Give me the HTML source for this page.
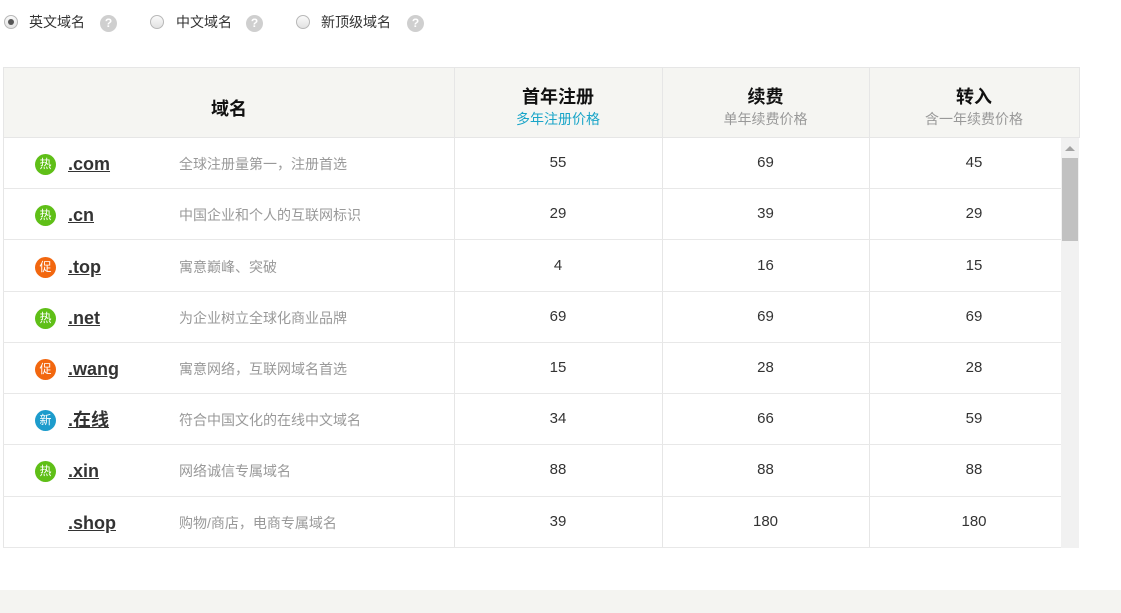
<!DOCTYPE html>
<html><head><meta charset="utf-8">
<style>
*{margin:0;padding:0;box-sizing:border-box}
body{width:1121px;height:613px;background:#fff;position:relative;overflow:hidden;font-family:"Liberation Sans","Noto Sans CJK SC",sans-serif;}
.a{position:absolute}
.radio{width:14px;height:14px;border-radius:50%;border:1px solid #b8b8b8;background:linear-gradient(#fafafa,#e2e2e2);top:15px}
.radio.on::after{content:"";position:absolute;left:3px;top:3px;width:6px;height:6px;border-radius:50%;background:#555}
.rl{top:12px;font-size:14px;color:#333;line-height:20px}
.q{width:17px;height:17px;border-radius:50%;background:#cfcfcf;color:#fff;font-size:12px;font-weight:bold;text-align:center;line-height:17px;top:15px}
.hd{background:#f5f5f2;border:1px solid #e6e6e6;}
.vl{width:1px;background:#e6e6e6}
.hl{height:1px;background:#e8e8e8}
.ic{width:21px;height:21px;border-radius:50%;color:#fff;font-size:12px;text-align:center;line-height:21px;left:35px}
.dm{left:68px;font-size:18px;font-weight:bold;color:#333;text-decoration:underline;line-height:22px}
.ds{left:179px;font-size:14px;color:#999;line-height:22px}
.n{font-size:15px;color:#333;text-align:center;line-height:22px}
.th{font-size:18px;font-weight:bold;color:#111;text-align:center}
.ts{font-size:14px;text-align:center;color:#999}
</style></head><body>
<div class="a radio on" style="left:4px"></div><div class="a rl" style="left:29px">英文域名</div><div class="a q" style="left:100px">?</div>
<div class="a radio" style="left:150px"></div><div class="a rl" style="left:176px">中文域名</div><div class="a q" style="left:246px">?</div>
<div class="a radio" style="left:296px"></div><div class="a rl" style="left:321px">新顶级域名</div><div class="a q" style="left:407px">?</div>

<div class="a hd" style="left:3px;top:67px;width:1077px;height:71px"></div>
<div class="a th" style="left:4px;top:95px;width:450px">域名</div>
<div class="a th" style="left:454px;top:83px;width:208px">首年注册</div>
<div class="a ts" style="left:454px;top:109px;width:208px;color:#1aa5c8">多年注册价格</div>
<div class="a th" style="left:662px;top:83px;width:207px">续费</div>
<div class="a ts" style="left:662px;top:109px;width:207px">单年续费价格</div>
<div class="a th" style="left:869px;top:83px;width:210px">转入</div>
<div class="a ts" style="left:869px;top:109px;width:210px">含一年续费价格</div>

<div class="a" style="left:3px;top:137px;width:1px;height:411px;background:#e6e6e6"></div>
<div class="a vl" style="left:454px;top:67px;height:481px"></div>
<div class="a vl" style="left:662px;top:67px;height:481px"></div>
<div class="a vl" style="left:869px;top:67px;height:481px"></div>
<div class="a hl" style="left:3px;top:547px;width:1058px"></div>
<div class="a hl" style="left:3px;top:188px;width:1058px"></div>
<div class="a hl" style="left:3px;top:239px;width:1058px"></div>
<div class="a hl" style="left:3px;top:291px;width:1058px"></div>
<div class="a hl" style="left:3px;top:342px;width:1058px"></div>
<div class="a hl" style="left:3px;top:393px;width:1058px"></div>
<div class="a hl" style="left:3px;top:444px;width:1058px"></div>
<div class="a hl" style="left:3px;top:496px;width:1058px"></div>

<div class="a" style="left:1061px;top:138px;width:18px;height:410px;background:#f1f1f1"></div>
<div class="a" style="left:1065px;top:146px;width:0;height:0;border-left:5px solid transparent;border-right:5px solid transparent;border-bottom:5px solid #a3a3a3"></div>
<div class="a" style="left:1062px;top:158px;width:16px;height:83px;background:#c1c1c1"></div>

<div class="a ic" style="top:154px;background:#5fbf17">热</div><div class="a dm" style="top:153px">.com</div><div class="a ds" style="top:153px">全球注册量第一，注册首选</div>
<div class="a n" style="left:454px;width:208px;top:152px">55</div><div class="a n" style="left:662px;width:207px;top:152px">69</div><div class="a n" style="left:869px;width:210px;top:152px">45</div>

<div class="a ic" style="top:205px;background:#5fbf17">热</div><div class="a dm" style="top:204px">.cn</div><div class="a ds" style="top:204px">中国企业和个人的互联网标识</div>
<div class="a n" style="left:454px;width:208px;top:203px">29</div><div class="a n" style="left:662px;width:207px;top:203px">39</div><div class="a n" style="left:869px;width:210px;top:203px">29</div>

<div class="a ic" style="top:257px;background:#f2670f">促</div><div class="a dm" style="top:256px">.top</div><div class="a ds" style="top:256px">寓意巅峰、突破</div>
<div class="a n" style="left:454px;width:208px;top:255px">4</div><div class="a n" style="left:662px;width:207px;top:255px">16</div><div class="a n" style="left:869px;width:210px;top:255px">15</div>

<div class="a ic" style="top:308px;background:#5fbf17">热</div><div class="a dm" style="top:307px">.net</div><div class="a ds" style="top:307px">为企业树立全球化商业品牌</div>
<div class="a n" style="left:454px;width:208px;top:306px">69</div><div class="a n" style="left:662px;width:207px;top:306px">69</div><div class="a n" style="left:869px;width:210px;top:306px">69</div>

<div class="a ic" style="top:359px;background:#f2670f">促</div><div class="a dm" style="top:358px">.wang</div><div class="a ds" style="top:358px">寓意网络，互联网域名首选</div>
<div class="a n" style="left:454px;width:208px;top:357px">15</div><div class="a n" style="left:662px;width:207px;top:357px">28</div><div class="a n" style="left:869px;width:210px;top:357px">28</div>

<div class="a ic" style="top:410px;background:#1d9ccc">新</div><div class="a dm" style="top:409px">.在线</div><div class="a ds" style="top:409px">符合中国文化的在线中文域名</div>
<div class="a n" style="left:454px;width:208px;top:408px">34</div><div class="a n" style="left:662px;width:207px;top:408px">66</div><div class="a n" style="left:869px;width:210px;top:408px">59</div>

<div class="a ic" style="top:461px;background:#5fbf17">热</div><div class="a dm" style="top:460px">.xin</div><div class="a ds" style="top:460px">网络诚信专属域名</div>
<div class="a n" style="left:454px;width:208px;top:459px">88</div><div class="a n" style="left:662px;width:207px;top:459px">88</div><div class="a n" style="left:869px;width:210px;top:459px">88</div>

<div class="a dm" style="top:512px">.shop</div><div class="a ds" style="top:512px">购物/商店，电商专属域名</div>
<div class="a n" style="left:454px;width:208px;top:511px">39</div><div class="a n" style="left:662px;width:207px;top:511px">180</div><div class="a n" style="left:869px;width:210px;top:511px">180</div>

<div class="a" style="left:0;top:590px;width:1121px;height:23px;background:#f4f4f1"></div>
</body></html>
